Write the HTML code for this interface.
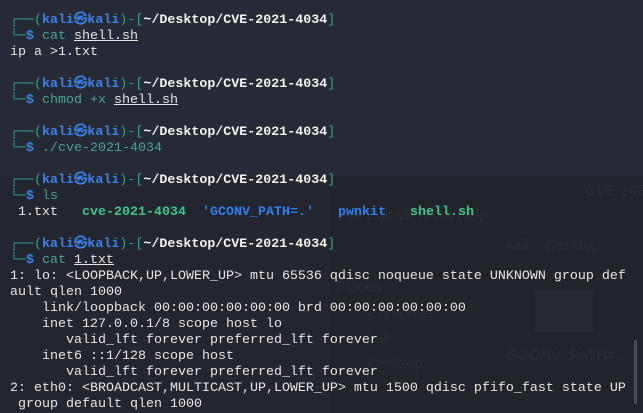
<!DOCTYPE html>
<html><head><meta charset="utf-8"><style>
html,body{margin:0;padding:0;}
body{width:643px;height:413px;overflow:hidden;position:relative;background:#252a35;}
.bg2{position:absolute;left:330px;top:176px;width:313px;height:237px;background:#22242b;}
.bgl{position:absolute;left:0;top:176px;width:330px;height:237px;background:#23262f;}
.fm{position:absolute;font-family:"Liberation Sans",sans-serif;color:#2a2d35;font-size:15px;white-space:nowrap;}
.term{position:absolute;left:10px;top:13px;font-family:"Liberation Mono","DejaVu Sans Mono",monospace;font-size:13.33px;line-height:16px;color:#e6e6e6;white-space:pre;}
.g{color:#2fa58a}
.b{color:#3c82e6;font-weight:bold}
.w{color:#f2f2f2;font-weight:bold}
.c{color:#4aa68d}
.u{text-decoration:underline}
.gb{color:#3fc58c;font-weight:bold}
.bb{color:#2f7ff0;font-weight:bold}
.sb{position:absolute;left:634px;top:340px;width:3px;height:64px;background:#4a4d55;border-radius:2px;}
</style></head><body>
<div class="bgl"></div><div class="bg2"></div>
<div class="fm" style="left:585px;top:182px">CVE-2021</div>
<div class="fm" style="left:338px;top:207px">File  Edit  View  Go  Help</div>
<div class="fm" style="left:506px;top:237px">kali &nbsp;&nbsp; Desktop</div>
<div class="fm" style="left:336px;top:278px">Places</div>
<div class="fm" style="left:368px;top:305px">Computer</div>
<div class="fm" style="left:368px;top:330px">kali</div>
<div class="fm" style="left:368px;top:355px">Desktop</div>
<div class="fm" style="left:506px;top:347px">GCONV_PATH=.</div>
<div style="position:absolute;left:535px;top:290px;width:58px;height:42px;background:#262a33"></div>
<div class="sb"></div>
<div class="term"><span class="g">┌──(</span><span class="b">kali㉿kali</span><span class="g">)-[</span><span class="w">~/Desktop/CVE-2021-4034</span><span class="g">]</span>
<span class="g">└─</span><span class="b">$</span> <span class="c">cat</span> <span class="u">shell.sh</span>
ip a &gt;1.txt

<span class="g">┌──(</span><span class="b">kali㉿kali</span><span class="g">)-[</span><span class="w">~/Desktop/CVE-2021-4034</span><span class="g">]</span>
<span class="g">└─</span><span class="b">$</span> <span class="c">chmod</span> <span class="c">+x</span> <span class="u">shell.sh</span>

<span class="g">┌──(</span><span class="b">kali㉿kali</span><span class="g">)-[</span><span class="w">~/Desktop/CVE-2021-4034</span><span class="g">]</span>
<span class="g">└─</span><span class="b">$</span> <span class="c">./cve-2021-4034</span>

<span class="g">┌──(</span><span class="b">kali㉿kali</span><span class="g">)-[</span><span class="w">~/Desktop/CVE-2021-4034</span><span class="g">]</span>
<span class="g">└─</span><span class="b">$</span> <span class="c">ls</span>
 1.txt   <span class="gb">cve-2021-4034</span>  <span class="bb">'GCONV_PATH=.'</span>   <span class="bb">pwnkit</span>   <span class="gb">shell.sh</span>

<span class="g">┌──(</span><span class="b">kali㉿kali</span><span class="g">)-[</span><span class="w">~/Desktop/CVE-2021-4034</span><span class="g">]</span>
<span class="g">└─</span><span class="b">$</span> <span class="c">cat</span> <span class="u">1.txt</span>
1: lo: &lt;LOOPBACK,UP,LOWER_UP&gt; mtu 65536 qdisc noqueue state UNKNOWN group def
ault qlen 1000
    link/loopback 00:00:00:00:00:00 brd 00:00:00:00:00:00
    inet 127.0.0.1/8 scope host lo
       valid_lft forever preferred_lft forever
    inet6 ::1/128 scope host
       valid_lft forever preferred_lft forever
2: eth0: &lt;BROADCAST,MULTICAST,UP,LOWER_UP&gt; mtu 1500 qdisc pfifo_fast state UP
 group default qlen 1000</div>
</body></html>
